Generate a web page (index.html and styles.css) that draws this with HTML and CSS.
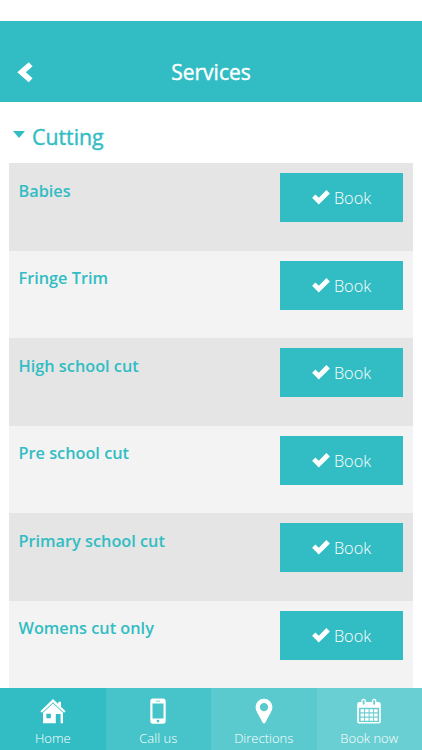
FILE: index.html
```
<!DOCTYPE html>
<html lang="en">
<head>
<meta charset="UTF-8" />
<meta name="viewport" content="width=device-width, initial-scale=1" />
<title>Services</title>
<link rel="stylesheet" href="styles.css">
</head>
<body>

<!-- Shared icon shapes -->
<svg class="sprite" aria-hidden="true">
  <symbol id="check" viewBox="0 0 18 15">
    <path d="M0.1 7.8 L3.4 4.5 L6.8 7.7 L14.4 0.1 L17.9 3.5 L6.8 14.6 Z" />
  </symbol>
</svg>

<header class="header">
  <a href="#" class="back" aria-label="Back">
    <svg width="16" height="21" viewBox="0 0 16 21"><path d="M11.7 0.2 L15.6 4.2 L8.8 10.2 L15.6 16.2 L11.7 20.2 L0.3 10.2 Z" /></svg>
  </a>
  <h1>Services</h1>
</header>

<main class="content">
  <h2 class="category"><span class="arrow"></span>Cutting</h2>

  <ul class="services">
    <li><span class="name">Babies</span><button class="book"><svg><use href="#check" /></svg><span>Book</span></button></li>
    <li><span class="name">Fringe Trim</span><button class="book"><svg><use href="#check" /></svg><span>Book</span></button></li>
    <li><span class="name">High school cut</span><button class="book"><svg><use href="#check" /></svg><span>Book</span></button></li>
    <li><span class="name">Pre school cut</span><button class="book"><svg><use href="#check" /></svg><span>Book</span></button></li>
    <li><span class="name">Primary school cut</span><button class="book"><svg><use href="#check" /></svg><span>Book</span></button></li>
    <li><span class="name">Womens cut only</span><button class="book"><svg><use href="#check" /></svg><span>Book</span></button></li>
  </ul>
</main>

<nav class="tabs">
  <a href="#" class="tab home">
    <svg width="26" height="26" viewBox="0 0 26 26">
      <path d="M0.4 13.2 L13 0.9 L18.3 6.1 V3.8 H21 V8.7 L25.6 13.2 L24.1 14.8 L13 4.4 L1.9 14.8 Z" />
      <path fill-rule="evenodd" d="M13 5.5 L23 14.8 V25.3 H20.6 V16 H15.8 V25.3 H3 V14.8 Z M6.4 15.8 V20.2 H10.8 V15.8 Z" />
    </svg>
    <span>Home</span>
  </a>
  <a href="#" class="tab call">
    <svg width="26" height="26" viewBox="0 0 26 26">
      <path fill-rule="evenodd" d="M8 0.5 H18 Q20.7 0.5 20.7 3.2 V23 Q20.7 25.7 18 25.7 H8 Q5.3 25.7 5.3 23 V3.2 Q5.3 0.5 8 0.5 Z M7.5 5.6 V20.4 H18.5 V5.6 Z M11 2.7 V3.6 H15 V2.7 Z M13 21.7 A1.4 1.4 0 1 0 13 24.5 A1.4 1.4 0 1 0 13 21.7 Z" />
    </svg>
    <span>Call us</span>
  </a>
  <a href="#" class="tab directions">
    <svg width="26" height="26" viewBox="0 0 26 26">
      <path fill-rule="evenodd" d="M13 0.8 A8.4 8.4 0 0 1 21.4 9.2 C21.4 13.5 17.5 17.4 14.5 24.6 Q13 26.6 11.5 24.6 C8.5 17.4 4.6 13.5 4.6 9.2 A8.4 8.4 0 0 1 13 0.8 Z M13 4.9 A4.2 4.2 0 1 0 13 13.3 A4.2 4.2 0 1 0 13 4.9 Z" />
    </svg>
    <span>Directions</span>
  </a>
  <a href="#" class="tab booking">
    <svg width="26" height="26" viewBox="0 0 26 26">
      <path fill-rule="evenodd" d="M3.4 4 H22.6 Q24.8 4 24.8 6.2 V23.4 Q24.8 25.6 22.6 25.6 H3.4 Q1.2 25.6 1.2 23.4 V6.2 Q1.2 4 3.4 4 Z M2.9 9.8 V23.9 H23.1 V9.8 Z" />
      <rect class="ring" x="6" y="1.4" width="3.2" height="6" rx="1.6" />
      <rect class="ring" x="16.6" y="1.4" width="3.2" height="6" rx="1.6" />
      <path d="M4.6 11.2h3.5v3H4.6z M9.1 11.2h3.5v3H9.1z M13.6 11.2h3.5v3h-3.5z M18.1 11.2h3.5v3h-3.5z M4.6 15.5h3.5v3H4.6z M9.1 15.5h3.5v3H9.1z M13.6 15.5h3.5v3h-3.5z M18.1 15.5h3.5v3h-3.5z M4.6 19.8h3.5v3H4.6z M9.1 19.8h3.5v3H9.1z M13.6 19.8h3.5v3h-3.5z M18.1 19.8h3.5v3h-3.5z" />
    </svg>
    <span>Book now</span>
  </a>
</nav>

</body>
</html>
```
FILE: styles.css
```
* {
  box-sizing: border-box;
}

body {
  margin: 0;
  height: 100vh;
  display: flex;
  flex-direction: column;
  overflow: hidden;
  background: white;
  font-family: "Open Sans", sans-serif;
  color: #31bdc3;
}

.sprite {
  display: none;
}

svg {
  fill: white;
}

/* Header */
.header {
  flex: none;
  height: 81px;
  margin-top: 21px;
  padding: 21px 17px 0;
  display: grid;
  grid-template-columns: 30px 1fr 30px;
  align-items: center;
  background: #31bdc3;
  color: white;
}

.header h1 {
  margin: 0;
  text-align: center;
  font-size: 21px;
  font-weight: 400;
  line-height: 28px;
  -webkit-text-stroke: 0.4px;
}

.back svg {
  display: block;
}

/* Service list */
.content {
  flex: 1;
  min-height: 0;
  padding: 0 9px;
  overflow: hidden;
}

.category {
  display: flex;
  height: 61px;
  margin: 0;
  padding: 20px 0 0 4px;
  font-size: 21.3px;
  font-weight: 400;
  line-height: 29px;
  -webkit-text-stroke: 0.4px;
}

.arrow {
  width: 12px;
  height: 7px;
  margin: 9px 7px 0 0;
  background: #31bdc3;
  clip-path: polygon(0 0, 100% 0, 50% 100%);
}

.services {
  margin: 0;
  padding: 0;
  list-style: none;
}

.services li {
  display: flex;
  justify-content: space-between;
  align-items: flex-start;
  height: 87.5px;
  padding: 10px;
  background: #f3f3f3;
}

.services li:nth-child(odd) {
  background: #e5e5e5;
}

.name {
  margin-top: 6.5px;
  margin-left: -0.5px;
  font-size: 16.3px;
  font-weight: 600;
  line-height: 23px;
}

.book {
  display: flex;
  justify-content: center;
  align-items: center;
  gap: 4px;
  width: 123px;
  height: 49px;
  padding: 1px 0 0;
  border: none;
  background: #31bdc3;
  color: white;
  font-family: inherit;
  font-size: 16.3px;
  font-weight: 300;
  cursor: pointer;
}

.book svg {
  width: 18px;
  height: 15px;
  margin-bottom: 1px;
}

/* Bottom tabs */
.tabs {
  flex: none;
  display: grid;
  grid-template-columns: repeat(4, 1fr);
  height: 62px;
}

.tab {
  display: flex;
  flex-direction: column;
  align-items: center;
  padding-top: 10px;
  color: white;
  font-size: 13px;
  font-weight: 300;
  line-height: 18px;
  text-decoration: none;
}

.tab span {
  margin-top: 5px;
}

.home { background: #31bdc3; }
.call { background: #46c4c9; }
.directions { background: #5acace; }
.booking { background: #6acfd2; }

.ring {
  fill: #6acfd2;
  stroke: white;
  stroke-width: 1.3;
}
```
